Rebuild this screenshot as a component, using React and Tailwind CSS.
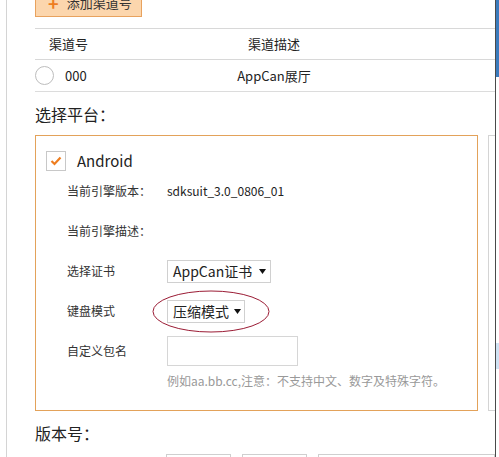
import React from 'react';

const Caret = () => (
  <svg width="7" height="5" viewBox="0 0 7 5" className="ml-auto shrink-0">
    <path d="M0 0 L7 0 L3.5 5 Z" fill="#111" />
  </svg>
);

const FormRow = ({ label, children }) => (
  <div className="flex items-center h-[40px] pl-[31px]">
    <div className="w-[100px] text-[12px] text-[#333]">{label}</div>
    {children}
  </div>
);

const App = () => {
  return (
    <div
      className="w-[499px] h-[457px] overflow-hidden bg-white flex"
      style={{ fontFamily: '"Noto Sans CJK SC", "Noto Sans", sans-serif' }}
    >
      <div className="w-[6px]" />
      <div className="flex-1 border-l border-[#d4d4d4] pl-[28px] overflow-hidden">
        {/* add channel button */}
        <div className="mt-[-11px] h-[28px] w-[107px] bg-[#fcd6ad] border border-[#e8a25e] flex items-center pl-[12px] text-[13px] text-[#333]">
          <span className="text-[#ee7d1f] text-[18px] font-bold leading-none mr-[8px]">+</span>
          添加渠道号
        </div>

        {/* channel table */}
        <div className="mt-[11px] border-t border-[#d8d8d8]">
          <div className="flex items-center h-[31px] border-b border-[#d8d8d8] text-[13px] text-[#222]">
            <div className="w-[150px] pl-[14px]">渠道号</div>
            <div className="w-[178px] text-center">渠道描述</div>
          </div>
          <div className="flex items-center h-[32px] border-b border-[#dcdcdc] text-[13px] text-[#222]">
            <div className="w-[150px] flex items-center">
              <div className="w-[19px] h-[19px] rounded-full border border-[#bdbdbd]" />
              <span className="ml-[11px]">000</span>
            </div>
            <div className="w-[178px] text-center">AppCan展厅</div>
          </div>
        </div>

        <div className="h-[43px] flex items-center text-[16px] text-[#222]">选择平台：</div>

        {/* platform box */}
        <div className="flex gap-[10px]">
          <div className="w-[443px] shrink-0 h-[276px] border border-[#e3a25a]">
            <div className="flex items-center h-[20px] mt-[15px] pl-[10px]">
              <div className="w-[20px] h-[20px] border border-[#c8c8c8] flex items-center justify-center">
                <svg width="12" height="10" viewBox="0 0 12 10">
                  <path d="M1.5 5 L4.5 8 L10.5 1.5" stroke="#ee7d1f" strokeWidth="2.2" fill="none" />
                </svg>
              </div>
              <span className="ml-[11px] text-[15px] text-[#222]">Android</span>
            </div>

            <FormRow label="当前引擎版本：">
              <span className="text-[12px] text-[#222]">sdksuit_3.0_0806_01</span>
            </FormRow>
            <FormRow label="当前引擎描述：" />
            <FormRow label="选择证书">
              <div className="w-[104px] h-[23px] border border-[#d0d0d0] flex items-center pl-[5px] pr-[4px] text-[14px] text-[#222]">
                AppCan证书
                <Caret />
              </div>
            </FormRow>
            <FormRow label="键盘模式">
              <div className="relative">
                <div className="w-[78px] h-[23px] border border-[#d0d0d0] flex items-center pl-[5px] pr-[3px] text-[14px] text-[#222]">
                  压缩模式
                  <Caret />
                </div>
                <svg
                  width="118"
                  height="43"
                  viewBox="0 0 118 43"
                  className="absolute left-[-15px] top-[-10px] pointer-events-none"
                >
                  <ellipse cx="59" cy="21.5" rx="58" ry="20.5" fill="none" stroke="#9b1c35" strokeWidth="1" />
                </svg>
              </div>
            </FormRow>
            <FormRow label="自定义包名">
              <div className="w-[131px] h-[30px] border border-[#d6d6d6]" />
            </FormRow>
            <div className="h-[20px] pl-[131px] flex items-center text-[12px] text-[#999]">
              例如aa.bb.cc,注意：不支持中文、数字及特殊字符。
            </div>
          </div>
          <div className="w-[40px] shrink-0 h-[276px] border border-[#d4d4d4]" />
        </div>

        <div className="h-[43px] flex items-center text-[16px] text-[#222]">版本号：</div>

        <div className="flex pl-[131px] gap-[11px]">
          <div className="w-[65px] h-[20px] border border-[#cfcfcf]" />
          <div className="w-[65px] h-[20px] border border-[#cfcfcf]" />
          <div className="flex-1 h-[20px] border border-[#cfcfcf]" />
        </div>
      </div>

      {/* scrollbar */}
      <div className="w-[4px] border-l border-[#4a4a4a] flex flex-col">
        <div className="h-[77px] bg-[#3a7bbd]" />
        <div className="h-[266px]" />
        <div className="h-[26px] bg-[#cfe2f3]" />
      </div>
    </div>
  );
};

export default App;
